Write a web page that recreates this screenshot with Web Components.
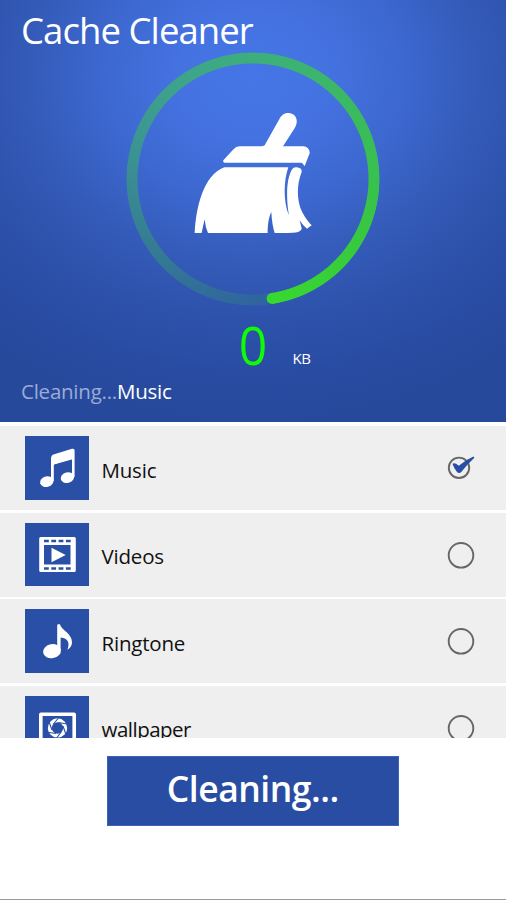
<!DOCTYPE html>
<html lang="en">
<head>
<meta charset="utf-8">
<title>Cache Cleaner</title>
<style>
body{margin:0;background:#fff;font-family:"Open Sans","Noto Sans",sans-serif;color:#000}
</style>
</head>
<body>
<cache-app></cache-app>
<script>
const define = (name, html) => customElements.define(name, class extends HTMLElement {
  constructor() {
    super();
    this.attachShadow({ mode: 'open' }).innerHTML = html;
    if (name === 'category-icon') this.shadowRoot.querySelector('svg').innerHTML = GLYPHS[this.getAttribute('name')] || '';
  }
});

const GLYPHS = {
  music: `<ellipse cx="21.8" cy="45.6" rx="6.8" ry="5.3" transform="rotate(-14 21.8 45.6)"/><ellipse cx="42.4" cy="41.6" rx="6.8" ry="5.3" transform="rotate(-14 42.4 41.6)"/><path d="M26 45V22.5q0-3.300 3.200-4.200L47 12.800q2.600-.7 2.600 1.800V41H47V22.500L28.800 28.500V45Z"/><path d="M27 21 48.500 14V23L27 29Z"/>`,
  videos: `<path fill-rule="evenodd" d="M15.700 14h33.600q1.500 0 1.500 1.500v32q0 1.500-1.500 1.500H15.700q-1.500 0-1.500-1.500v-32q0-1.500 1.500-1.500ZM19 22v19.500h26.500V22ZM19 16.700v2.500h4.800v-2.500Zm7.300 0v2.500h4.800v-2.500Zm7.300 0v2.500h4.800v-2.500Zm7.300 0v2.500h4.800v-2.500ZM19 44.200v2.500h4.800v-2.500Zm7.300 0v2.500h4.800v-2.500Zm7.300 0v2.500h4.800v-2.500Zm7.300 0v2.500h4.800v-2.500Z"/><path d="M26.500 24.800v14.400l14.200-7.200Z"/>`,
  ringtone: `<ellipse cx="27" cy="42.200" rx="9" ry="7" transform="rotate(-10 27 42.200)"/><path d="M32.200 42V16.200q0-1 1.200-1h1.500c1.300 6 12.100 8.800 12.100 18 0 3-1.500 6-4.600 7.500 2.600-6.500 1-11.500-6.800-12.200V42Z"/>`,
  wallpaper: `<path fill-rule="evenodd" d="M16 16.500h33q2 0 2 2v33q0 2-2 2H16q-2 0-2-2v-33q0-2 2-2Zm1.600 3.500v30h29.800v-30Z"/><circle cx="32.500" cy="32" r="7.700" fill="none" stroke="#fff" stroke-width="4"/><path fill="none" stroke="#2a4fa6" stroke-width="1.100" d="M28 28.500 33.500 22M33.500 26.500l8.500 1.500M38 30l2.800 8M36.500 35.500l-5.200 7M31 37.500l-8.500-1.300M27 34l-2.900-8"/>`
};

define('app-header', `<style>
:host{display:flex;flex-direction:column;height:421.500px;box-sizing:border-box;padding:4px 21px 0;color:#fff;
background:radial-gradient(ellipse 415px 350px at 253px 76px,#4575e6 0,#4472e1 18%,#3d68d0 36%,#345bb9 54%,#2d52ab 70%,#294ca3 85%,#26499c 100%)}
h1{margin:0;font-size:36.500px;font-weight:400;line-height:52px;height:48px;letter-spacing:-.93px;white-space:nowrap}
progress-ring{align-self:center}
.amount{display:grid;grid-template-columns:1fr 40px 1fr;height:70px;margin-top:4px}
b{grid-column:2;font-size:53px;line-height:70px;font-weight:400;color:#10fb05;text-align:center;transform:scaleX(.94)}
small{font-size:15px;line-height:20px;padding:38px 0 0 19.500px;letter-spacing:-.4px}
p{margin:-3px 0 0;font-size:20.500px;line-height:28px;letter-spacing:-.24px;white-space:nowrap}
i{font-style:normal;color:#9babd6}
</style>
<h1>Cache Cleaner</h1><progress-ring><broom-icon></broom-icon></progress-ring>
<div class="amount"><b>0</b><small>KB</small></div>
<p><i>Cleaning...</i><span>Music</span></p>`);

define('progress-ring', `<style>
:host{display:grid;width:254px;height:254px;place-items:center;flex:none}
.ring,svg,slot{grid-area:1/1}
.ring{width:254px;height:254px;border-radius:50%;background:conic-gradient(from 171deg,rgba(56,217,46,.1),rgba(56,217,46,1));
-webkit-mask:radial-gradient(circle,transparent 115px,#000 116px,#000 126px,transparent 127px);mask:radial-gradient(circle,transparent 115px,#000 116px,#000 126px,transparent 127px)}
svg{width:254px;height:254px}
</style><div class="ring"></div><svg viewBox="0 0 254 254"><circle cx="146.200" cy="246.400" r="5.600" fill="#38d92e"/></svg><slot></slot>`);

define('broom-icon', `<style>:host{display:block;grid-area:1/1;width:150px;height:145px;transform:translate(2px,-6.700px)}svg{display:block}</style>
<svg width="150" height="145" viewBox="0 0 450 435" fill="#fff">
<path d="M254 135 297 58C304 45 311 38 325 38C343 38 352 52 350 67C349 75 345 82 340 90L309 138H370C382 138 390 149 389 159L374 197C370 195 371 187 361 187H134Q128 186 130 180L159 148Q168 138 179 138H244Q250 138 254 135Z"/>
<path d="M133 201H325C311 239 309 305 327 345C319 304 317 235 337 206Q340 200 350 201Q367 203 365 215C350 252 351 292 361 322C370 345 381 359 395 375L381 385Q370 378 359 360L365 384Q364 392 354 395Q342 399 284 398C279 382 275 360 274 335C266 350 263 375 263 398H84Q76 381 74 357Q69 378 65 398H44C48 322 70 224 133 201Z"/></svg>`);

define('category-icon', `<style>:host{display:block;width:63.500px;height:63.500px;background:#2a4fa6;flex:none}svg{display:block;width:100%;height:100%}</style><svg viewBox="0 0 63.500 63.500" fill="#fff"></svg>`);

define('check-mark', `<style>:host{display:block;width:30px;height:30px;flex:none}svg{display:block}.on,:host([checked]) .off{display:none}:host([checked]) .on{display:block}</style>
<svg width="30" height="30" fill="none"><circle class="off" cx="15" cy="15.300" r="12.300" stroke="#666" stroke-width="1.900"/><g class="on"><circle cx="13" cy="14.800" r="10.200" stroke="#666" stroke-width="1.900"/><path fill="#284da4" d="M6.500 11Q8.200 9 12.800 12.800Q20 6.500 27.500 3.500L28.400 4.700Q21 11.500 15.500 18.800Q13 21.300 10.800 18.800Q8 15 6.500 11Z"/></g></svg>`);

define('category-row', `<style>:host{display:flex;align-items:center;height:84px;padding:0 30px 0 25px;background:#efefef;flex:none;font-size:20.500px}
.label{flex:1;padding-left:13px;line-height:30px;margin-top:3px;letter-spacing:-.2px;color:#111}</style>
<slot name="icon"></slot><span class="label"><slot></slot></span><slot name="state"></slot>`);

define('category-list', `<style>:host{display:flex;flex-direction:column;gap:2.500px;height:312px;margin-top:4.500px;overflow:hidden}</style><slot></slot>`);

define('action-button', `<style>:host{display:block;margin:18px 0 0 107px;width:291.500px;height:70px}
button{display:block;width:100%;height:100%;border:1px solid #3c62b4;padding:0 0 7px;background:#294da3;color:#fff;font:600 35.500px/60px "Open Sans","Noto Sans",sans-serif;letter-spacing:-.5px}</style><button><slot></slot></button>`);

define('cache-app', `<style>:host{display:flex;flex-direction:column;width:506px;height:900px;box-sizing:border-box;border-bottom:1px solid #999;overflow:hidden;background:#fff}
.last{letter-spacing:-.5px}</style>
<app-header></app-header>
<category-list>
<category-row><category-icon slot="icon" name="music"></category-icon>Music<check-mark slot="state" checked></check-mark></category-row>
<category-row><category-icon slot="icon" name="videos"></category-icon>Videos<check-mark slot="state"></check-mark></category-row>
<category-row><category-icon slot="icon" name="ringtone"></category-icon>Ringtone<check-mark slot="state"></check-mark></category-row>
<category-row><category-icon slot="icon" name="wallpaper"></category-icon><span class="last">wallpaper</span><check-mark slot="state"></check-mark></category-row>
</category-list>
<action-button>Cleaning...</action-button>`);
</script>
</body>
</html>
